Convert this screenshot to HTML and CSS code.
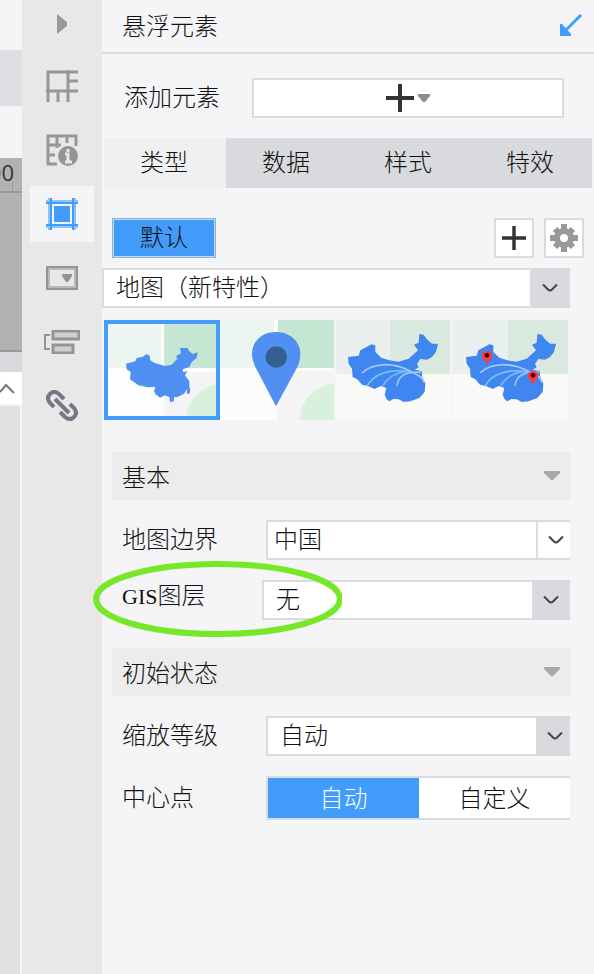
FILE: index.html
```html
<!DOCTYPE html>
<html lang="zh-CN">
<head>
    <meta charset="UTF-8">
    <meta name="viewport" content="width=device-width, initial-scale=1.0">
    <title>悬浮元素</title>
    <link rel="stylesheet" href="styles.css">
</head>
<body>
    <!-- shared shapes -->
    <svg class="defs" aria-hidden="true">
        <symbol id="chevron" viewBox="0 0 16 10">
            <path d="M1 1.500L6 6.500Q8 8.500 10 6.500L15 1.500" fill="none" stroke="#444" stroke-width="2"/>
        </symbol>
        <symbol id="plus" viewBox="0 0 28 28">
            <path d="M14 0V28M0 14H28" stroke="#333" stroke-width="4"/>
        </symbol>
        <g id="flow-map">
            <path fill="#e9f0ef" d="M0 24h174v162H0z"/>
            <path fill="#dae9df" d="M174 24h180v162H174z"/>
            <path fill="#f9faf8" d="M0 186h354v138H0z"/>
            <path fill="#4086f1" d="M48 135L80 131 85 115 102 106 118 97 130 100 130 120 148 137 172 145 200 149 230 140 258 115 246 98 260 92 262 66 275 68 285 82 300 95 318 95 312 120 300 135 285 143 265 141 255 156 260 166 248 173 270 178 270 192 280 215 278 240 262 258 235 268 215 270 200 262 184 261 172 268 164 262 158 248 163 228 146 222 128 231 108 222 90 218 76 202 62 195 60 170 50 155z"/>
            <g fill="none" stroke-width="5">
                <path stroke="#a9ccfa" d="M90 183C125 150 185 152 232 176S268 195 276 210"/>
                <path stroke="#70cbf5" d="M105 222C125 186 175 168 232 180"/>
                <path stroke="#7fb0f8" d="M152 222C166 196 192 182 222 178"/>
                <path stroke="#9fc4fb" d="M195 222C198 190 225 178 268 181"/>
            </g>
        </g>
        <g id="red-pin">
            <path fill="#f93b3b" d="M-15 -12L-8 -17H8L15 -12V4L7 11 0 22 -7 11 -15 4z"/>
            <circle r="7" cy="-5" fill="#220a0c"/>
        </g>
    </svg>

    <div class="app">
        <div class="canvas-edge">
            <div class="edge-bar"></div>
            <div class="edge-ruler"><span>00</span></div>
            <div class="edge-gray"></div>
            <button class="edge-up" type="button" aria-label="向上">
                <svg width="18" height="12" viewBox="0 0 18 12"><path d="M0 10L6 3L14 11" fill="none" stroke="#777" stroke-width="2"/></svg>
            </button>
            <div class="edge-rest"></div>
        </div>

        <nav class="sidebar">
            <button class="side-toggle" type="button" aria-label="收起">
                <svg width="10" height="20" viewBox="0 0 10 20"><path fill="#999" d="M0 0L10 8V12L0 20z"/></svg>
            </button>
            <button class="side-btn" type="button" aria-label="单元格元素">
                <svg width="32" height="32" viewBox="0 0 32 32" fill="none" stroke="#979797" stroke-width="3">
                    <path d="M2 32V2H32M22 0V32M0 21H32M22 11H32M12 21V32"/>
                </svg>
            </button>
            <button class="side-btn" type="button" aria-label="单元格属性">
                <svg width="32" height="32" viewBox="0 0 32 32" fill="none" stroke="#979797" stroke-width="3">
                    <path d="M11 30H2V2H30V12M11 1V14M21 1V9M1 11H15M1 21H9"/>
                    <circle cx="22" cy="22" r="10" fill="#949494" stroke="none"/>
                    <path stroke="#e8e8e8" stroke-width="3" d="M22 15V18M19 20H22V28M19 28H26"/>
                </svg>
            </button>
            <button class="side-btn active" type="button" aria-label="悬浮元素">
                <svg width="32" height="32" viewBox="0 0 32 32">
                    <path fill="none" stroke="#8cc2fb" stroke-width="4" d="M4 0V32M28 0V32M0 4H32M0 28H32"/>
                    <path fill="none" stroke="#429cfa" stroke-width="2" d="M5 0V32M27 0V32M0 5H32M0 27H32"/>
                    <path fill="#f5f5f8" d="M6 6h20v20H6z"/>
                    <path fill="#429cfa" d="M8 8h16v16H8z"/>
                </svg>
            </button>
            <button class="side-btn" type="button" aria-label="控件设置">
                <svg width="32" height="24" viewBox="0 0 32 24">
                    <path fill="none" stroke="#949494" stroke-width="2" d="M1 1h30v22H1z"/>
                    <path fill="none" stroke="#b8b8b8" stroke-width="2" d="M3 3h26v18H3z"/>
                    <path fill="#949494" d="M16 8H26V10L22 16H20L16 10z"/>
                </svg>
            </button>
            <button class="side-btn" type="button" aria-label="条件属性">
                <svg width="36" height="24" viewBox="0 0 36 24" fill="none" stroke="#949494" stroke-width="2">
                    <path stroke-width="3" fill="#d0d0d0" d="M9 1h26v8H9zM9 15h20v8H9z"/>
                    <path d="M6 5H1V19H6"/>
                </svg>
            </button>
            <button class="side-btn" type="button" aria-label="超级链接">
                <svg width="32" height="32" viewBox="0 0 32 32" fill="none" stroke="#747883" stroke-width="4">
                    <path d="M8 17L4 13Q0 8 4 4T13 4L18 9M24 14L28 18Q32 23 28 27T19 27L14 22M9 9L23 23"/>
                </svg>
            </button>
        </nav>

        <main class="panel">
            <header class="panel-head">
                <h1>悬浮元素</h1>
                <button class="collapse" type="button" aria-label="还原">
                    <svg width="22" height="22" viewBox="0 0 22 22">
                        <path fill="none" stroke="#429cfa" stroke-width="3" d="M21 1L4 18"/>
                        <path fill="#429cfa" d="M0 10H2L11 20V22H0z"/>
                    </svg>
                </button>
            </header>

            <div class="add-row">
                <span id="add-label">添加元素</span>
                <button class="add-btn" type="button" aria-labelledby="add-label">
                    <svg width="28" height="28"><use href="#plus"/></svg>
                    <svg width="12" height="8" viewBox="0 0 12 8"><path fill="#8c8c8c" d="M0 0H12V2L7 8H5L0 2z"/></svg>
                </button>
            </div>

            <div class="tabs" role="tablist">
                <button class="tab selected" type="button" role="tab" aria-selected="true">类型</button>
                <button class="tab" type="button" role="tab">数据</button>
                <button class="tab" type="button" role="tab">样式</button>
                <button class="tab" type="button" role="tab">特效</button>
            </div>

            <div class="tools">
                <button class="default-btn" type="button">默认</button>
                <button class="icon-btn" type="button" aria-label="添加">
                    <svg width="24" height="24"><use href="#plus"/></svg>
                </button>
                <button class="icon-btn" type="button" aria-label="设置">
                    <svg width="28" height="28" viewBox="0 0 28 28">
                        <path fill="none" stroke="#999" stroke-width="6" d="M14 0V7M14 21V28M0 14H7M21 14H28M5 5L9 9M19 19L23 23M23 5L19 9M9 19L5 23"/>
                        <circle cx="14" cy="14" r="7" fill="none" stroke="#999" stroke-width="6"/>
                    </svg>
                </button>
            </div>

            <div class="select chart-type">
                <select aria-label="图表类型">
                    <option>地图（新特性）</option>
                </select>
                <span class="arrow"><svg width="16" height="10"><use href="#chevron"/></svg></span>
            </div>

            <div class="thumbs">
                <button class="thumb selected" type="button" aria-label="区域地图">
                    <svg viewBox="12 24 348 300" preserveAspectRatio="none">
                        <path fill="#fbfcfb" d="M12 24h348v300H12z"/>
                        <path fill="#edf5f1" d="M12 24h171v144H12z"/>
                        <path fill="#c5e6d3" d="M192 24h168v144H192z"/>
                        <path fill="#fdfdfd" d="M12 177h171v147H12z"/>
                        <path fill="#f4f4f5" d="M192 180h168v144H192z"/>
                        <circle cx="366" cy="324" r="108" fill="#d7f1dc"/>
                        <path fill="#4f90f2" d="M78 155L106 148 110 138 128 134 140 126 150 132 150 144 164 153 195 162 215 158 232 140 228 132 243 124 240 108 263 108 267 117 278 126 293 121 290 138 275 150 268 165 248 172 250 180 262 178 255 190 268 208 268 225 271 235 268 246 260 244 262 230 252 245 235 254 222 256 222 268 210 270 208 255 195 250 180 257 166 246 162 238 166 225 145 226 115 220 90 202 92 180 80 172z"/>
                    </svg>
                </button>
                <button class="thumb" type="button" aria-label="点地图">
                    <svg viewBox="360 24 348 300" preserveAspectRatio="none">
                        <path fill="#fbfcfb" d="M360 24h342v300H360z"/>
                        <path fill="#edf5f1" d="M360 24h162v144H360z"/>
                        <path fill="#c5e6d3" d="M534 24h168v144H534z"/>
                        <path fill="#f4f4f5" d="M534 177h168v147H534z"/>
                        <path fill="#d7f1dc" d="M600 324A108 108 0 0 1 702 216V324z"/>
                        <path fill="#4f90f2" d="M528 283L466 165C436 102 478 60 528 60S620 102 592 165z"/>
                        <circle cx="529" cy="135" r="32" fill="#33608f"/>
                    </svg>
                </button>
                <button class="thumb" type="button" aria-label="流向地图">
                    <svg viewBox="12 24 348 300" preserveAspectRatio="none">
                        <use href="#flow-map"/>
                    </svg>
                </button>
                <button class="thumb" type="button" aria-label="组合地图">
                    <svg viewBox="6 24 348 300" preserveAspectRatio="none">
                        <use href="#flow-map"/>
                        <use href="#red-pin" x="111" y="135"/>
                        <use href="#red-pin" x="249" y="195"/>
                    </svg>
                </button>
            </div>

            <h2 class="section">基本
                <svg width="16" height="10" viewBox="0 0 16 10"><path fill="#a8a8a8" d="M0 0H16V2L9 9H7L0 2z"/></svg>
            </h2>
            <div class="row">
                <label for="border">地图边界</label>
                <div class="select plain">
                    <select id="border"><option>中国</option></select>
                    <span class="arrow"><svg width="16" height="10"><use href="#chevron"/></svg></span>
                </div>
            </div>
            <div class="row gis">
                <label for="gis"><span class="latin">GIS</span>图层</label>
                <div class="select">
                    <select id="gis"><option>无</option></select>
                    <span class="arrow"><svg width="16" height="10"><use href="#chevron"/></svg></span>
                </div>
                <svg class="mark" viewBox="0 0 250 76" aria-hidden="true">
                    <ellipse cx="126" cy="38" rx="122" ry="35" fill="none" stroke="#76e829" stroke-width="6"/>
                </svg>
            </div>

            <h2 class="section">初始状态
                <svg width="16" height="10" viewBox="0 0 16 10"><path fill="#a8a8a8" d="M0 0H16V2L9 9H7L0 2z"/></svg>
            </h2>
            <div class="row">
                <label for="zoom">缩放等级</label>
                <div class="select zoom-level">
                    <select id="zoom"><option>自动</option></select>
                    <span class="arrow"><svg width="16" height="10"><use href="#chevron"/></svg></span>
                </div>
            </div>
            <div class="row">
                <span class="label" id="center-label">中心点</span>
                <div class="segment" role="group" aria-labelledby="center-label">
                    <button class="on" type="button">自动</button>
                    <button type="button">自定义</button>
                </div>
            </div>
        </main>
    </div>
</body>
</html>
```

FILE: styles.css
```css
* {
    box-sizing: border-box;
}
body {
    margin: 0;
    background-color: #f5f5f8;
    color: #111;
    font-family: "Noto Sans CJK SC", sans-serif;
    font-size: 24px;
    font-weight: 300;
    line-height: 28px;
}
button, select {
    margin: 0;
    padding: 0;
    border: 0;
    border-radius: 0;
    background: none;
    color: inherit;
    font: inherit;
}
h1, h2 {
    margin: 0;
    font-size: 24px;
    font-weight: 300;
}
svg {
    display: block;
}
.defs {
    position: absolute;
    width: 0;
    height: 0;
}
.app {
    display: flex;
    min-height: 100vh;
}

/* strip of the report canvas */
.canvas-edge {
    display: flex;
    flex-direction: column;
    width: 22px;
    overflow: hidden;
}
.edge-bar {
    height: 56px;
    margin: 50px 0 52px;
    background-color: #dedfe2;
}
.edge-ruler {
    height: 194px;
    border-bottom: 2px solid #999;
    background: linear-gradient(#999, #999) 12px 24px / 1px 10px no-repeat,
        linear-gradient(#999, #999) 0 33px / 100% 2px no-repeat #b2b2b2;
}
.edge-ruler span {
    display: flex;
    justify-content: flex-end;
    width: 14px;
    color: #333;
    font-family: "Open Sans", sans-serif;
    font-size: 22px;
    font-weight: 400;
}
.edge-gray {
    height: 20px;
    background-color: #d8d9dc;
}
.edge-up {
    display: flex;
    align-items: center;
    height: 32px;
    margin-bottom: 2px;
    background-color: #fff;
}
.edge-rest {
    flex: 1;
    margin-right: 2px;
    background-color: #e1e1e1;
}

.sidebar {
    display: flex;
    flex-direction: column;
    align-items: center;
    gap: 8px;
    width: 80px;
    background-color: #e8e8e8;
}
.side-toggle,
.side-btn {
    display: flex;
    align-items: center;
    justify-content: center;
    width: 64px;
    height: 56px;
}
.side-toggle {
    height: 48px;
    margin-bottom: 2px;
}
.side-btn.active {
    background-color: #f5f5f8;
}

.panel {
    flex: 1;
    min-width: 0;
}
.panel-head {
    display: flex;
    align-items: center;
    justify-content: space-between;
    height: 54px;
    padding: 0 12px 2px 20px;
    border-bottom: 2px solid #dadbde;
}
.add-row {
    display: flex;
    align-items: center;
    padding: 24px 30px 20px 22px;
}
.add-row span {
    width: 128px;
    padding-bottom: 4px;
}
.add-btn {
    display: flex;
    flex: 1;
    align-items: center;
    justify-content: center;
    gap: 4px;
    height: 40px;
    border: 2px solid #dadbde;
    background-color: #fff;
}

.tabs {
    display: grid;
    grid-template-columns: repeat(4, 1fr);
    margin: 0 2px;
}
.tab {
    height: 50px;
    padding: 0 2px 4px 0;
    background-color: #d9dadd;
}
.tab.selected {
    background-color: #f0f0f2;
}

.tools {
    display: flex;
    gap: 10px;
    padding: 30px 10px 10px;
}
.default-btn {
    width: 104px;
    height: 40px;
    margin-right: auto;
    padding-bottom: 4px;
    border: 2px solid #ccd3dc;
    outline: 1px solid #7fb5ee;
    outline-offset: -1px;
    background-color: #429cfa;
}
.icon-btn {
    display: flex;
    align-items: center;
    justify-content: center;
    width: 40px;
    height: 40px;
    border: 2px solid #dadbde;
    background-color: #fff;
}

.select {
    display: flex;
    height: 40px;
    border: 2px solid #dadbde;
    border-right: 0;
    background-color: #fff;
}
.select select {
    flex: 1;
    min-width: 0;
    padding: 0 0 4px 12px;
    appearance: none;
}
.select .arrow {
    display: flex;
    align-items: center;
    justify-content: center;
    width: 38px;
    margin: -2px 0;
    background-color: #d9dadd;
    pointer-events: none;
}
.select.chart-type {
    margin-right: 24px;
}
.select.chart-type .arrow {
    width: 40px;
}
.select.plain select {
    padding-left: 6px;
}
.select.plain .arrow {
    width: 34px;
    margin: 0;
    padding-left: 4px;
    border-left: 2px solid #dadbde;
    background-color: #fff;
}
.select.zoom-level .arrow {
    width: 34px;
    padding-left: 4px;
}

.thumbs {
    display: grid;
    grid-template-columns: repeat(4, 1fr);
    margin: 12px 26px 32px 2px;
}
.thumb {
    position: relative;
    height: 100px;
}
.thumb svg {
    width: 100%;
    height: 100px;
}
.thumb.selected::after {
    content: "";
    position: absolute;
    inset: 0;
    border: 4px solid #429cfa;
}

.section {
    display: flex;
    align-items: center;
    justify-content: space-between;
    height: 48px;
    margin: 0 24px 20px 10px;
    padding: 0 10px;
    background-color: #ececec;
}
.row {
    display: flex;
    align-items: center;
    margin: 0 24px 20px 20px;
}
.row label,
.row .label {
    width: 144px;
    padding-bottom: 4px;
}
.row .select,
.row .segment {
    flex: 1;
}
.row.gis {
    position: relative;
    align-items: flex-start;
    margin-bottom: 28px;
}
.row.gis label {
    width: 140px;
}
.latin {
    font-family: "Liberation Serif", serif;
    font-size: 22px;
    font-weight: 400;
}
.mark {
    position: absolute;
    top: -19px;
    left: -30px;
    width: 250px;
    height: 76px;
    pointer-events: none;
}
.segment {
    display: grid;
    grid-template-columns: 1fr 1fr;
    height: 44px;
    border: 2px solid #dadbde;
    border-right: 0;
    background-color: #fff;
}
.segment button {
    padding-bottom: 2px;
}
.segment .on {
    background-color: #429cfa;
    color: #fff;
}
```
